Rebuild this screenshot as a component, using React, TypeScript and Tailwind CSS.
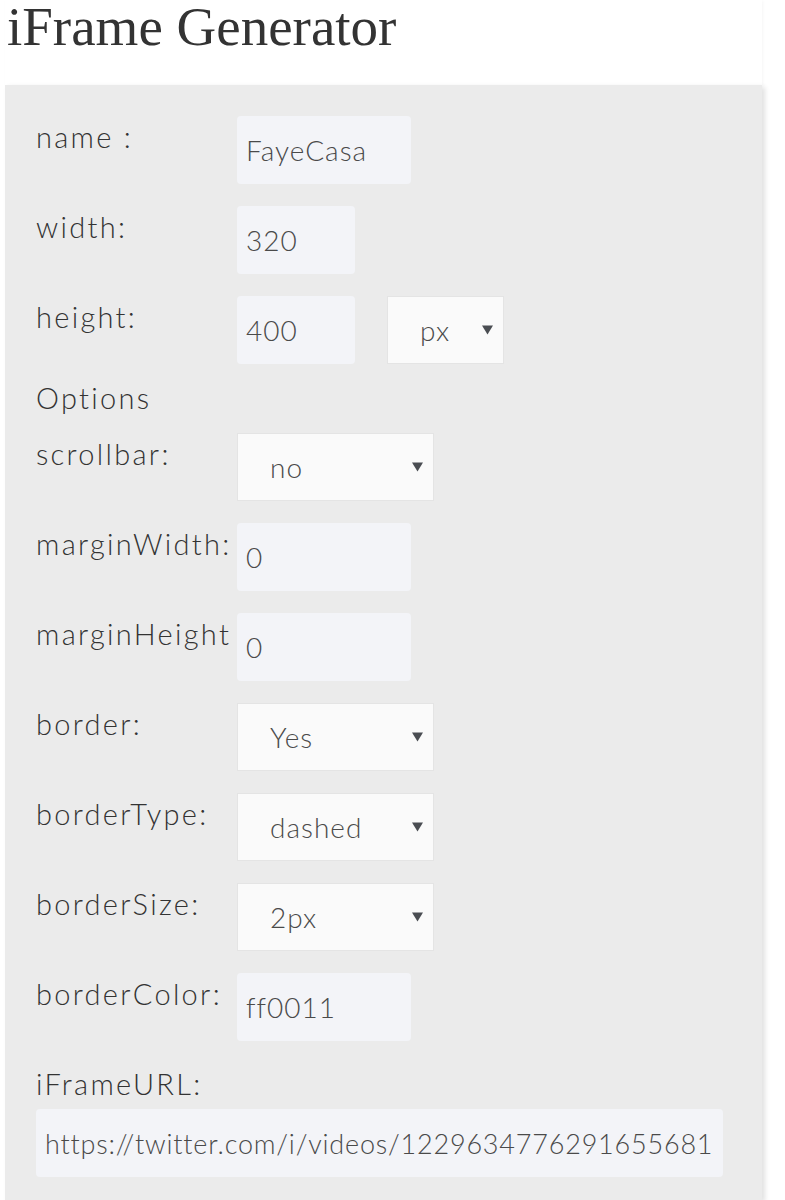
import React from 'react'

const font = { fontFamily: 'Lato, "Open Sans", sans-serif' }

function Label({ children }: { children: React.ReactNode }) {
  return (
    <div className="w-[201px] shrink-0 whitespace-nowrap pt-[6px] text-[29px] font-light leading-none tracking-[2.3px] text-[#333]">
      {children}
    </div>
  )
}

function TextBox({ value, width }: { value: string; width: string }) {
  return (
    <input
      readOnly
      value={value}
      className={`${width} h-[68px] rounded-[4px] bg-[#f3f4f8] px-[9px] text-[28px] font-light tracking-[1px] text-[#4a4a4a] outline-none`}
    />
  )
}

function Arrow() {
  return (
    <svg
      className="absolute right-[10px] top-1/2 -translate-y-1/2"
      width="11"
      height="11"
      viewBox="0 0 11 11"
    >
      <path d="M0 1 H11 L5.5 10 Z" fill="#4a4d52" />
    </svg>
  )
}

function Select({ value, width }: { value: string; width: string }) {
  return (
    <div className={`relative ${width} h-[68px] border border-[#e4e4e4] bg-[#fafafa]`}>
      <div className="flex h-full items-center pl-[32px] text-[28px] font-light tracking-[1px] text-[#4a4a4a]">
        {value}
      </div>
      <Arrow />
    </div>
  )
}

function Row({
  label,
  children,
}: {
  label: string
  children: React.ReactNode
}) {
  return (
    <div className="mb-[22px] flex items-start">
      <Label>{label}</Label>
      {children}
    </div>
  )
}

export default function App() {
  return (
    <div className="min-h-screen bg-white" style={font}>
      <div className="ml-[5px] w-[757px]">
        <header className="h-[85px] pl-[2px] shadow-[1px_1px_3px_rgba(0,0,0,0.04)]">
          <h1
            className="text-[55px] leading-[54px] text-[#333]"
            style={{ fontFamily: '"Liberation Serif", serif' }}
          >
            iFrame Generator
          </h1>
        </header>

        <main className="min-h-[1115px] bg-[#ebebeb] pl-[31px] pt-[31px] pr-[38px] shadow-[3px_2px_5px_rgba(0,0,0,0.12)]">
          <Row label="name :">
            <TextBox value="FayeCasa" width="w-[174px]" />
          </Row>
          <Row label="width:">
            <TextBox value="320" width="w-[118px]" />
          </Row>
          <Row label="height:">
            <div className="flex gap-[32px]">
              <TextBox value="400" width="w-[118px]" />
              <Select value="px" width="w-[117px]" />
            </div>
          </Row>

          <div className="-mt-[22px] h-[69px] pt-[19px] text-[29px] font-light leading-none tracking-[2.3px] text-[#333]">
            Options
          </div>

          <Row label="scrollbar:">
            <Select value="no" width="w-[197px]" />
          </Row>
          <Row label="marginWidth:">
            <TextBox value="0" width="w-[174px]" />
          </Row>
          <Row label="marginHeight">
            <TextBox value="0" width="w-[174px]" />
          </Row>
          <Row label="border:">
            <Select value="Yes" width="w-[197px]" />
          </Row>
          <Row label="borderType:">
            <Select value="dashed" width="w-[197px]" />
          </Row>
          <Row label="borderSize:">
            <Select value="2px" width="w-[197px]" />
          </Row>
          <Row label="borderColor:">
            <TextBox value="ff0011" width="w-[174px]" />
          </Row>

          <div className="h-[46px] pt-[6px] text-[29px] font-light leading-none tracking-[2.3px] text-[#333]">
            iFrameURL:
          </div>
          <input
            readOnly
            value="https://twitter.com/i/videos/1229634776291655681"
            className="h-[68px] w-[687px] rounded-[4px] bg-[#f3f4f8] px-[9px] text-[27px] font-light tracking-[0.8px] text-[#4a4a4a] outline-none"
          />
        </main>
      </div>
    </div>
  )
}
